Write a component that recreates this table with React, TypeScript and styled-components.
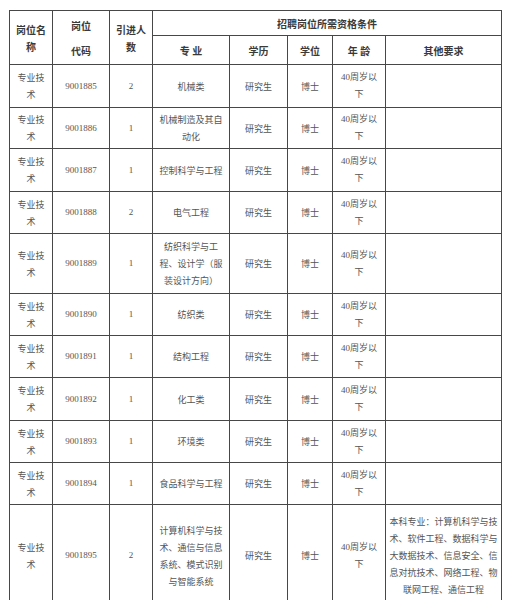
import React from "react";
import styled, { createGlobalStyle } from "styled-components";

const Global = createGlobalStyle`
  html, body { margin: 0; padding: 0; background: #ffffff; }
  body { font-family: "Liberation Serif", "Noto Sans CJK SC", serif; }
`;

const Page = styled.div`
  padding: 10px 0 0 9px;
  width: 510px;
  height: 600px;
  box-sizing: border-box;
  overflow: hidden;
`;

const Table = styled.table`
  border-collapse: collapse;
  table-layout: fixed;
  width: 492px;
  color: #555;
`;

const HeadCell = styled.th<{ $tall?: boolean }>`
  border: 1px solid #474747;
  padding: 0 2px;
  font-family: "Noto Sans CJK SC", sans-serif;
  font-size: 10px;
  font-weight: 700;
  color: #3a3a3a;
  line-height: ${(p) => (p.$tall ? "25px" : "17px")};
  text-align: center;
  vertical-align: middle;
  white-space: nowrap;
`;

const Cell = styled.td<{ $num?: boolean }>`
  border: 1px solid #474747;
  padding: 0 2px;
  font-family: ${(p) =>
    p.$num ? `"Liberation Serif", "Noto Sans CJK SC", serif` : `"Noto Sans CJK SC", sans-serif`};
  font-size: 9px;
  line-height: 17px;
  color: #555;
  text-align: center;
  vertical-align: middle;
  white-space: nowrap;
`;

const Line = styled.span`
  display: block;
`;

const Row = styled.tr<{ $h: number }>`
  height: ${(p) => p.$h}px;
`;

type Item = {
  code: string;
  count: string;
  major: string[];
  other?: string[];
  h: number;
};

const rows: Item[] = [
  { code: "9001885", count: "2", major: ["机械类"], h: 43 },
  { code: "9001886", count: "1", major: ["机械制造及其自", "动化"], h: 41 },
  { code: "9001887", count: "1", major: ["控制科学与工程"], h: 43 },
  { code: "9001888", count: "2", major: ["电气工程"], h: 42 },
  { code: "9001889", count: "1", major: ["纺织科学与工", "程、设计学（服", "装设计方向）"], h: 60 },
  { code: "9001890", count: "1", major: ["纺织类"], h: 42 },
  { code: "9001891", count: "1", major: ["结构工程"], h: 42 },
  { code: "9001892", count: "1", major: ["化工类"], h: 43 },
  { code: "9001893", count: "1", major: ["环境类"], h: 42 },
  { code: "9001894", count: "1", major: ["食品科学与工程"], h: 42 },
  {
    code: "9001895",
    count: "2",
    major: ["计算机科学与技", "术、通信与信息", "系统、模式识别", "与智能系统"],
    other: [
      "本科专业：计算机科学与技",
      "术、软件工程、数据科学与",
      "大数据技术、信息安全、信",
      "息对抗技术、网络工程、物",
      "联网工程、通信工程",
    ],
    h: 102,
  },
];

const Lines = ({ lines }: { lines: string[] }) => (
  <>
    {lines.map((l, i) => (
      <Line key={i}>{l}</Line>
    ))}
  </>
);

export default function App() {
  return (
    <Page>
      <Global />
      <Table>
        <colgroup>
          <col style={{ width: 43 }} />
          <col style={{ width: 57 }} />
          <col style={{ width: 43 }} />
          <col style={{ width: 77 }} />
          <col style={{ width: 58 }} />
          <col style={{ width: 45 }} />
          <col style={{ width: 53 }} />
          <col style={{ width: 116 }} />
        </colgroup>
        <thead>
          <Row $h={25}>
            <HeadCell rowSpan={2}>
              <Lines lines={["岗位名", "称"]} />
            </HeadCell>
            <HeadCell rowSpan={2} $tall>
              <Lines lines={["岗位", "代码"]} />
            </HeadCell>
            <HeadCell rowSpan={2}>
              <Lines lines={["引进人", "数"]} />
            </HeadCell>
            <HeadCell colSpan={5}>招聘岗位所需资格条件</HeadCell>
          </Row>
          <Row $h={29}>
            <HeadCell>专&nbsp;业</HeadCell>
            <HeadCell>学历</HeadCell>
            <HeadCell>学位</HeadCell>
            <HeadCell>年&nbsp;龄</HeadCell>
            <HeadCell>其他要求</HeadCell>
          </Row>
        </thead>
        <tbody>
          {rows.map((r) => (
            <Row $h={r.h} key={r.code}>
              <Cell>
                <Lines lines={["专业技", "术"]} />
              </Cell>
              <Cell $num>{r.code}</Cell>
              <Cell $num>{r.count}</Cell>
              <Cell>
                <Lines lines={r.major} />
              </Cell>
              <Cell>研究生</Cell>
              <Cell>博士</Cell>
              <Cell $num>
                <Lines lines={["40周岁以", "下"]} />
              </Cell>
              <Cell>{r.other ? <Lines lines={r.other} /> : null}</Cell>
            </Row>
          ))}
        </tbody>
      </Table>
    </Page>
  );
}
